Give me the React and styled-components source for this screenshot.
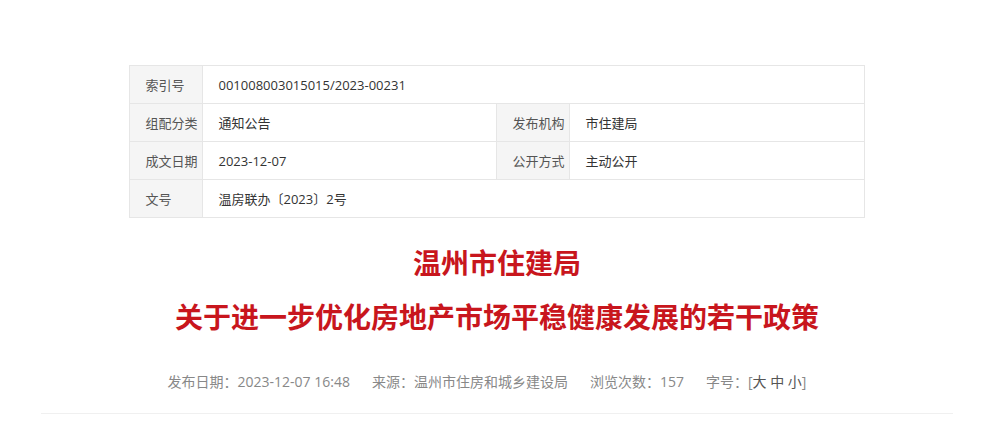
import styled, { createGlobalStyle } from "styled-components";

const GlobalStyle = createGlobalStyle`
  html, body {
    margin: 0;
    padding: 0;
    background: #fff;
  }
  body {
    font-family: "Open Sans", "Noto Sans CJK SC", sans-serif;
  }
`;

const Container = styled.div`
  width: 912px;
  margin: 0 auto;
  padding-top: 65px;
`;

const InfoTable = styled.table`
  width: 734px;
  margin: 0 auto;
  border-collapse: collapse;
  table-layout: fixed;
  font-size: 13px;
`;

const Cell = styled.td`
  height: 37px;
  padding: 0 15px;
  border: 1px solid #e6e6e6;
  color: ${(p) => (p.$label ? "#555" : "#333")};
  background: ${(p) => (p.$label ? "#f5f5f5" : "#fff")};
  white-space: nowrap;
`;

const TitleBlock = styled.div`
  margin-top: 17px;
  text-align: center;
`;

const TitleLine = styled.h1`
  margin: 0;
  font-size: 28px;
  line-height: 54px;
  font-weight: bold;
  color: #c8161d;
  font-family: "Noto Sans CJK SC", sans-serif;
`;

const Meta = styled.div`
  display: flex;
  justify-content: center;
  gap: 22px;
  margin-top: 27px;
  padding: 0 20px 19px 0;
  border-bottom: 1px solid #f0f0f0;
  font-size: 14px;
  line-height: 24px;
  color: #888;
`;

const MetaItem = styled.span``;

const SizeLink = styled.span`
  color: #555;
`;

const rows = [
  [["索引号", "001008003015015/2023-00231"]],
  [
    ["组配分类", "通知公告"],
    ["发布机构", "市住建局"],
  ],
  [
    ["成文日期", "2023-12-07"],
    ["公开方式", "主动公开"],
  ],
  [["文号", "温房联办〔2023〕2号"]],
];

export default function App() {
  return (
    <>
      <GlobalStyle />
      <Container>
        <InfoTable>
          <colgroup>
            <col style={{ width: 73 }} />
            <col style={{ width: 294 }} />
            <col style={{ width: 73 }} />
            <col style={{ width: 294 }} />
          </colgroup>
          <tbody>
            {rows.map((row, i) => (
              <tr key={i}>
                {row.map(([label, value]) => [
                  <Cell $label key={label}>
                    {label}
                  </Cell>,
                  <Cell key={label + "v"} colSpan={row.length === 1 ? 3 : 1}>
                    {value}
                  </Cell>,
                ])}
              </tr>
            ))}
          </tbody>
        </InfoTable>
        <TitleBlock>
          <TitleLine>温州市住建局</TitleLine>
          <TitleLine>关于进一步优化房地产市场平稳健康发展的若干政策</TitleLine>
        </TitleBlock>
        <Meta>
          <MetaItem>发布日期：2023-12-07 16:48</MetaItem>
          <MetaItem>来源：温州市住房和城乡建设局</MetaItem>
          <MetaItem>浏览次数：157</MetaItem>
          <MetaItem>
            字号：[<SizeLink>大</SizeLink> <SizeLink>中</SizeLink>{" "}
            <SizeLink>小</SizeLink>]
          </MetaItem>
        </Meta>
      </Container>
    </>
  );
}
